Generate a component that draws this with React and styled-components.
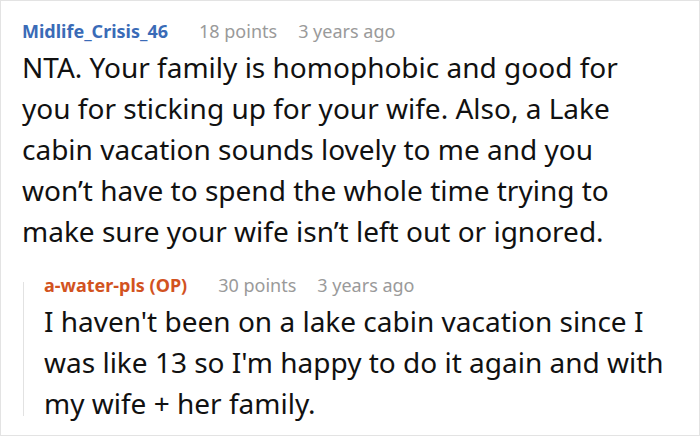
import React from 'react';
import styled, { createGlobalStyle } from 'styled-components';

const GlobalStyle = createGlobalStyle`
    html, body {
        margin: 0;
        padding: 0;
        background: #fff;
    }
    body {
        font-family: "Noto Sans", "Open Sans", sans-serif;
    }
`;

const comment = {
    author: 'Midlife_Crisis_46',
    points: '18 points',
    time: '3 years ago',
    text: 'NTA. Your family is homophobic and good for you for sticking up for your wife. Also, a Lake cabin vacation sounds lovely to me and you won’t have to spend the whole time trying to make sure your wife isn’t left out or ignored.',
    reply: {
        author: 'a-water-pls (OP)',
        points: '30 points',
        time: '3 years ago',
        text: "I haven't been on a lake cabin vacation since I was like 13 so I'm happy to do it again and with my wife + her family.",
    },
};

export default function App() {
    const { reply } = comment;
    return (
        <>
            <GlobalStyle />
            <Card>
                <Meta>
                    <Author>{comment.author}</Author>
                    <Info>{comment.points}</Info>
                    <Info>{comment.time}</Info>
                </Meta>
                <Body>{comment.text}</Body>
                <Reply>
                    <Meta>
                        <Author op>{reply.author}</Author>
                        <Info>{reply.points}</Info>
                        <Info>{reply.time}</Info>
                    </Meta>
                    <Body>{reply.text}</Body>
                </Reply>
            </Card>
        </>
    );
}

const Card = styled.div`
    box-sizing: border-box;
    width: 700px;
    height: 436px;
    border: 1px solid #e3e3e3;
    padding: 17px 34px 0 21px;
    overflow: hidden;
`;

const Meta = styled.div`
    display: flex;
    align-items: baseline;
    gap: 21px;
    font-size: 18px;
    line-height: 26px;
`;

const Author = styled.span`
    font-weight: 700;
    color: ${p => (p.op ? '#d2531f' : '#3a6bb7')};
    margin-right: 10px;
`;

const Info = styled.span`
    color: #9a9a9a;
`;

const Body = styled.div`
    margin-top: 3px;
    font-size: 28px;
    line-height: 41px;
    color: #111;
`;

const Reply = styled.div`
    position: relative;
    margin-top: 20px;
    padding-left: 22px;

    &::before {
        content: '';
        position: absolute;
        left: 1px;
        top: 10px;
        bottom: 8px;
        width: 1px;
        background: #e2e2e2;
    }
`;
